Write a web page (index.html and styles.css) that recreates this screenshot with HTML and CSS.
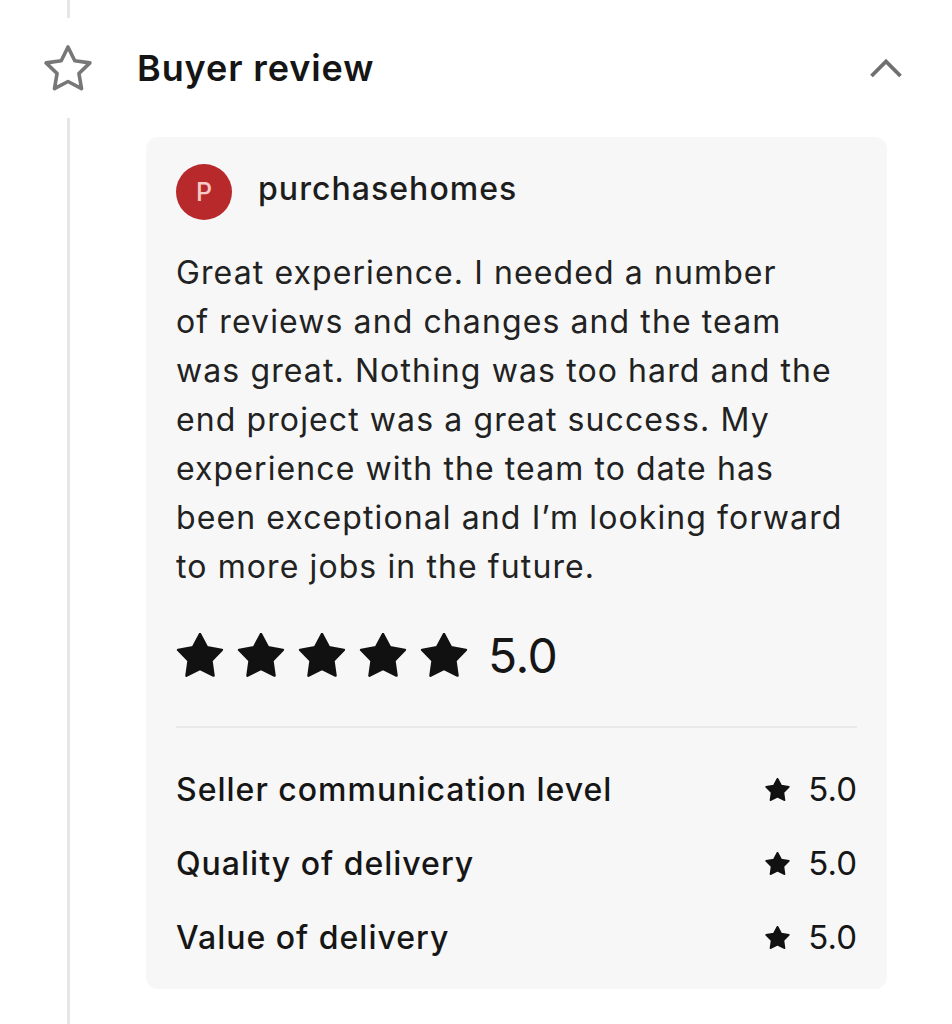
FILE: index.html
```html
<!DOCTYPE html>
<html lang="en">
<head>
<meta charset="utf-8">
<title>Buyer review</title>
<link rel="stylesheet" href="styles.css">
</head>
<body>
<div class="page">
  <div class="rail-top"></div>
  <div class="header">
    <svg class="hdr-star" viewBox="0 0 48 48" width="48" height="48" aria-hidden="true">
      <path d="M24 3L30.76 16.7 45.87 18.89 34.94 29.55 37.52 44.61 24 37.5 10.48 44.61 13.06 29.55 2.13 18.89 17.24 16.7Z" fill="none" stroke="#777" stroke-width="3.6" stroke-linejoin="round"/>
    </svg>
    <h1 class="title">Buyer review</h1>
    <svg class="chevron" viewBox="0 0 34 22" width="34" height="22" aria-hidden="true">
      <path d="M2.5 19L17 4.5 31.5 19" fill="none" stroke="#6f6f6f" stroke-width="3.8"/>
    </svg>
  </div>
  <div class="content">
    <div class="rail"></div>
    <div class="card">
      <div class="user">
        <div class="avatar">P</div>
        <div class="username">purchasehomes</div>
      </div>
      <p class="text">Great experience. I needed a number<br>of reviews and changes and the team<br>was great. Nothing was too hard and the<br>end project was a great success. My<br>experience with the team to date has<br>been exceptional and I’m looking forward<br>to more jobs in the future.</p>
      <div class="stars">
        <svg class="star-lg" viewBox="0 0 48 44"><path d="M24 1L31.05 14.29 45.87 16.89 35.41 27.71 37.52 42.61 24 36 10.48 42.61 12.59 27.71 2.13 16.89 16.95 14.29Z"/></svg>
        <svg class="star-lg" viewBox="0 0 48 44"><path d="M24 1L31.05 14.29 45.87 16.89 35.41 27.71 37.52 42.61 24 36 10.48 42.61 12.59 27.71 2.13 16.89 16.95 14.29Z"/></svg>
        <svg class="star-lg" viewBox="0 0 48 44"><path d="M24 1L31.05 14.29 45.87 16.89 35.41 27.71 37.52 42.61 24 36 10.48 42.61 12.59 27.71 2.13 16.89 16.95 14.29Z"/></svg>
        <svg class="star-lg" viewBox="0 0 48 44"><path d="M24 1L31.05 14.29 45.87 16.89 35.41 27.71 37.52 42.61 24 36 10.48 42.61 12.59 27.71 2.13 16.89 16.95 14.29Z"/></svg>
        <svg class="star-lg" viewBox="0 0 48 44"><path d="M24 1L31.05 14.29 45.87 16.89 35.41 27.71 37.52 42.61 24 36 10.48 42.61 12.59 27.71 2.13 16.89 16.95 14.29Z"/></svg>
        <span class="score">5.0</span>
      </div>
      <div class="divider"></div>
      <div class="rows">
        <div class="row">
          <span class="label">Seller communication level</span>
          <span class="val"><svg class="star-sm" viewBox="0 0 48 44"><path d="M24 1L31.05 14.29 45.87 16.89 35.41 27.71 37.52 42.61 24 36 10.48 42.61 12.59 27.71 2.13 16.89 16.95 14.29Z"/></svg>5.0</span>
        </div>
        <div class="row">
          <span class="label">Quality of delivery</span>
          <span class="val"><svg class="star-sm" viewBox="0 0 48 44"><path d="M24 1L31.05 14.29 45.87 16.89 35.41 27.71 37.52 42.61 24 36 10.48 42.61 12.59 27.71 2.13 16.89 16.95 14.29Z"/></svg>5.0</span>
        </div>
        <div class="row">
          <span class="label">Value of delivery</span>
          <span class="val"><svg class="star-sm" viewBox="0 0 48 44"><path d="M24 1L31.05 14.29 45.87 16.89 35.41 27.71 37.52 42.61 24 36 10.48 42.61 12.59 27.71 2.13 16.89 16.95 14.29Z"/></svg>5.0</span>
        </div>
      </div>
    </div>
  </div>
</div>
</body>
</html>
```

FILE: styles.css
```css
* { box-sizing: border-box; }
html, body { margin: 0; padding: 0; background: #ffffff; }
body {
  font-family: "Inter", "Liberation Sans", sans-serif;
  color: #1a1a1a;
  width: 952px;
  height: 1024px;
  overflow: hidden;
}
.page { display: flex; flex-direction: column; }
.rail-top {
  width: 3px;
  height: 18px;
  margin-left: 67px;
  background: #e6e6e6;
}
.header {
  height: 100px;
  display: flex;
  align-items: center;
  padding-left: 44px;
  padding-right: 49px;
}
.hdr-star { flex: none; }
.title {
  margin: 0 0 0 45px;
  flex: 1;
  font-size: 36px;
  font-weight: 600;
  color: #151515;
  letter-spacing: 0.9px;
}
.chevron { flex: none; }
.content {
  display: flex;
  height: 906px;
}
.rail {
  width: 3px;
  margin-left: 67px;
  background: #e6e6e6;
  flex: none;
}
.card {
  margin: 19px 0 0 76px;
  width: 741px;
  height: 852px;
  background: #f7f7f7;
  border-radius: 12px;
  padding: 27px 30px 0 30px;
}
.user { display: flex; align-items: center; }
.avatar {
  width: 56px;
  height: 56px;
  border-radius: 50%;
  background: #b8292b;
  color: #f6c9c6;
  display: flex;
  align-items: center;
  justify-content: center;
  font-size: 25px;
  font-weight: 500;
  flex: none;
}
.username {
  margin-left: 26px;
  font-size: 32px;
  font-weight: 500;
  color: #1d1d1d;
  margin-top: -8px;
  letter-spacing: 1.05px;
}
.text {
  margin: 28px 0 0 0;
  font-size: 32px;
  line-height: 49px;
  color: #222;
  letter-spacing: 1.1px;
  white-space: nowrap;
}
.stars {
  display: flex;
  align-items: center;
  margin-top: 40px;
  height: 48px;
}
.star-lg {
  width: 48px;
  height: 44px;
  margin-right: 13px;
  fill: #111;
  stroke: #111;
  stroke-width: 2.5;
  stroke-linejoin: round;
  flex: none;
}
.star-lg:nth-child(5) { margin-right: 20px; }
.score {
  font-size: 48px;
  color: #161616;
  letter-spacing: -0.5px;
}
.divider {
  height: 2px;
  background: #e9e9e9;
  margin-top: 47px;
}
.rows { margin-top: 24px; }
.row {
  display: flex;
  justify-content: space-between;
  align-items: center;
  height: 74px;
}
.label {
  font-size: 32px;
  font-weight: 500;
  color: #161616;
  letter-spacing: 1.0px;
}
.val {
  display: flex;
  align-items: center;
  font-size: 33px;
  color: #161616;
}
.star-sm {
  width: 25px;
  height: 23px;
  fill: #111;
  stroke: #111;
  stroke-width: 3;
  stroke-linejoin: round;
  margin-right: 18px;
  flex: none;
}
```
